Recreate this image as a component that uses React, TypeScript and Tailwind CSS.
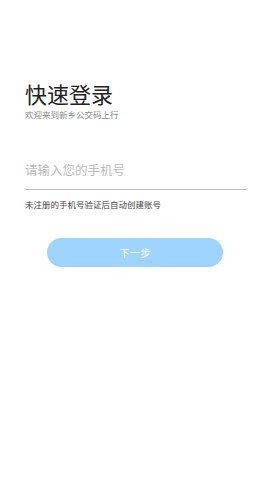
export default function App() {
  return (
    <div
      className="w-[270px] h-[480px] bg-white flex flex-col"
      style={{ fontFamily: '"Noto Sans CJK SC", "Noto Sans", sans-serif' }}
    >
      <div className="pl-[25px] pr-[23px] pt-[79px] flex flex-col">
        <h1 className="text-[22px] leading-[28px] text-[#222] font-normal">快速登录</h1>
        <p className="mt-[1px] text-[8.5px] leading-[12px] text-[#888]">欢迎来到新乡公交码上行</p>
        <div className="mt-[40px] h-[30px] flex items-center border-b border-[#bdbdbd]">
          <span className="text-[12.5px] text-[#bbb] leading-[16px] -mt-[10px]">请输入您的手机号</span>
        </div>
        <p className="mt-[8px] text-[8.5px] leading-[12px] text-[#444]">未注册的手机号验证后自动创建账号</p>
      </div>
      <div className="mt-[28px] flex justify-center">
        <button className="w-[176px] h-[29px] rounded-full bg-[#9dd3fd] text-white text-[10.5px] flex items-center justify-center">
          下一步
        </button>
      </div>
    </div>
  );
}
